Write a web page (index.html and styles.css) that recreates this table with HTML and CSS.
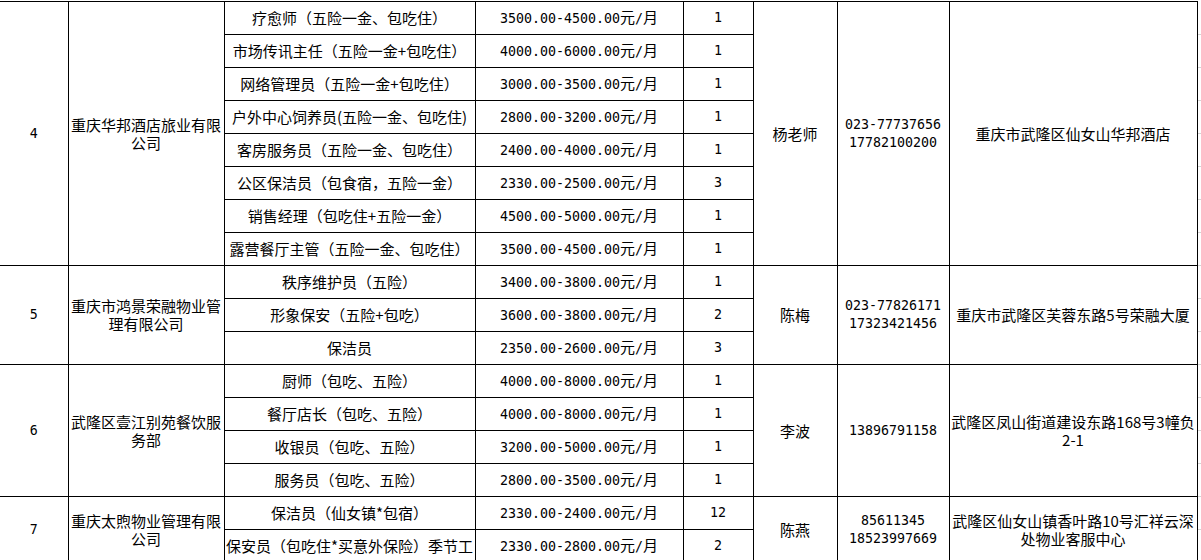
FILE: index.html
```html
<!DOCTYPE html>
<html lang="zh-CN">
<head>
<meta charset="utf-8">
<title>招聘岗位表</title>
<link rel="stylesheet" href="styles.css">
</head>
<body>
<table class="sheet">
  <colgroup>
    <col class="c-idx"><col class="c-co"><col class="c-job"><col class="c-pay"><col class="c-cnt"><col class="c-who"><col class="c-tel"><col class="c-addr"><col class="c-gap">
  </colgroup>
  <tbody>
    <tr>
      <td class="idx n" rowspan="8">4</td>
      <td class="co" rowspan="8">重庆华邦酒店旅业有限公司</td>
      <td class="job">疗愈师（五险一金、包吃住）</td>
      <td><span class="n">3500.00-4500.00</span>元<span class="n">/</span>月</td>
      <td class="n">1</td>
      <td rowspan="8">杨老师</td>
      <td class="n" rowspan="8">023-77737656<br>17782100200</td>
      <td class="addr" rowspan="8">重庆市武隆区仙女山华邦酒店</td>
      <td class="gap"></td>
    </tr>
    <tr>
      <td class="job">市场传讯主任（五险一金+包吃住）</td>
      <td><span class="n">4000.00-6000.00</span>元<span class="n">/</span>月</td>
      <td class="n">1</td>
      <td class="gap"></td>
    </tr>
    <tr>
      <td class="job">网络管理员（五险一金+包吃住）</td>
      <td><span class="n">3000.00-3500.00</span>元<span class="n">/</span>月</td>
      <td class="n">1</td>
      <td class="gap"></td>
    </tr>
    <tr>
      <td class="job">户外中心饲养员(五险一金、包吃住)</td>
      <td><span class="n">2800.00-3200.00</span>元<span class="n">/</span>月</td>
      <td class="n">1</td>
      <td class="gap"></td>
    </tr>
    <tr>
      <td class="job">客房服务员（五险一金、包吃住）</td>
      <td><span class="n">2400.00-4000.00</span>元<span class="n">/</span>月</td>
      <td class="n">1</td>
      <td class="gap"></td>
    </tr>
    <tr>
      <td class="job">公区保洁员（包食宿，五险一金）</td>
      <td><span class="n">2330.00-2500.00</span>元<span class="n">/</span>月</td>
      <td class="n">3</td>
      <td class="gap"></td>
    </tr>
    <tr>
      <td class="job">销售经理（包吃住+五险一金）</td>
      <td><span class="n">4500.00-5000.00</span>元<span class="n">/</span>月</td>
      <td class="n">1</td>
      <td class="gap"></td>
    </tr>
    <tr>
      <td class="job">露营餐厅主管（五险一金、包吃住）</td>
      <td><span class="n">3500.00-4500.00</span>元<span class="n">/</span>月</td>
      <td class="n">1</td>
      <td class="gap"></td>
    </tr>

    <tr>
      <td class="idx n" rowspan="3">5</td>
      <td class="co" rowspan="3">重庆市鸿景荣融物业管理有限公司</td>
      <td class="job">秩序维护员（五险）</td>
      <td><span class="n">3400.00-3800.00</span>元<span class="n">/</span>月</td>
      <td class="n">1</td>
      <td rowspan="3">陈梅</td>
      <td class="n" rowspan="3">023-77826171<br>17323421456</td>
      <td class="addr" rowspan="3">重庆市武隆区芙蓉东路5号荣融大厦</td>
      <td class="gap"></td>
    </tr>
    <tr>
      <td class="job">形象保安（五险+包吃）</td>
      <td><span class="n">3600.00-3800.00</span>元<span class="n">/</span>月</td>
      <td class="n">2</td>
      <td class="gap"></td>
    </tr>
    <tr>
      <td class="job">保洁员</td>
      <td><span class="n">2350.00-2600.00</span>元<span class="n">/</span>月</td>
      <td class="n">3</td>
      <td class="gap"></td>
    </tr>

    <tr>
      <td class="idx n" rowspan="4">6</td>
      <td class="co" rowspan="4">武隆区壹江别苑餐饮服务部</td>
      <td class="job">厨师（包吃、五险）</td>
      <td><span class="n">4000.00-8000.00</span>元<span class="n">/</span>月</td>
      <td class="n">1</td>
      <td rowspan="4">李波</td>
      <td class="n" rowspan="4">13896791158</td>
      <td class="addr" rowspan="4">武隆区凤山街道建设东路168号3幢负2-1</td>
      <td class="gap"></td>
    </tr>
    <tr>
      <td class="job">餐厅店长（包吃、五险）</td>
      <td><span class="n">4000.00-8000.00</span>元<span class="n">/</span>月</td>
      <td class="n">1</td>
      <td class="gap"></td>
    </tr>
    <tr>
      <td class="job">收银员（包吃、五险）</td>
      <td><span class="n">3200.00-5000.00</span>元<span class="n">/</span>月</td>
      <td class="n">1</td>
      <td class="gap"></td>
    </tr>
    <tr>
      <td class="job">服务员（包吃、五险）</td>
      <td><span class="n">2800.00-3500.00</span>元<span class="n">/</span>月</td>
      <td class="n">1</td>
      <td class="gap"></td>
    </tr>

    <tr>
      <td class="idx n" rowspan="2">7</td>
      <td class="co" rowspan="2">重庆太煦物业管理有限公司</td>
      <td class="job">保洁员（仙女镇*包宿）</td>
      <td><span class="n">2330.00-2400.00</span>元<span class="n">/</span>月</td>
      <td class="n">12</td>
      <td rowspan="2">陈燕</td>
      <td class="n" rowspan="2">85611345<br>18523997669</td>
      <td class="addr" rowspan="2">武隆区仙女山镇香叶路10号汇祥云深处物业客服中心</td>
      <td class="gap"></td>
    </tr>
    <tr>
      <td class="job">保安员（包吃住*买意外保险）季节工</td>
      <td><span class="n">2330.00-2800.00</span>元<span class="n">/</span>月</td>
      <td class="n">2</td>
      <td class="gap"></td>
    </tr>
  </tbody>
</table>
</body>
</html>
```

FILE: styles.css
```css
html, body {
  margin: 0;
  padding: 0;
  background: #ffffff;
  overflow: hidden;
}

.sheet {
  border-collapse: collapse;
  table-layout: fixed;
  width: 1201px;
  margin-top: 1px;
  font-family: "Noto Sans CJK SC", "Noto Sans", sans-serif;
  font-size: 15px;
  line-height: 18px;
  color: #000000;
}

.c-idx { width: 68px; }
.c-co { width: 156px; }
.c-job { width: 251px; }
.c-pay { width: 208px; }
.c-cnt { width: 70px; }
.c-who { width: 84px; }
.c-tel { width: 112px; }
.c-addr { width: 248px; }
.c-gap { width: 4px; }

.sheet tr {
  height: 33px;
}

.sheet td {
  border: 1px solid #000000;
  padding: 0 1px;
  text-align: center;
  vertical-align: middle;
  overflow: visible;
}

.sheet td.idx {
  border-left: none;
}

.sheet td.job {
  white-space: nowrap;
}

.sheet td.gap {
  border: none;
  border-bottom: 1px solid #d4d4d4;
  padding: 0;
}

.n {
  font-family: "DejaVu Sans Mono", "Liberation Mono", monospace;
  font-size: 13.3px;
}
```
